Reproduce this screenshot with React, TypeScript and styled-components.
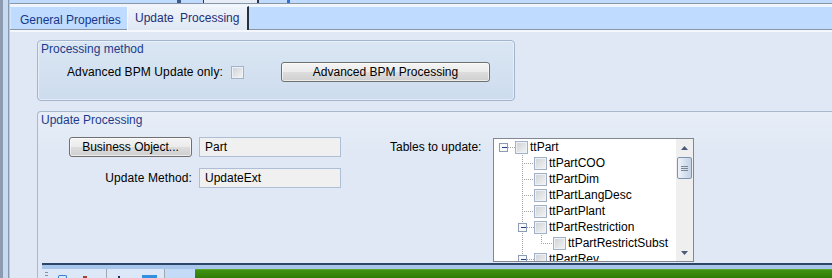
import styled, { createGlobalStyle } from 'styled-components';

const GlobalStyle = createGlobalStyle`
  html, body {
    margin: 0;
    padding: 0;
    background: #dfe8f4;
  }
  body {
    font-family: "Liberation Sans", Arial, sans-serif;
    font-size: 12px;
    color: #000;
    overflow: hidden;
  }
`;

const Window = styled.div`
  display: flex;
  width: 832px;
  height: 278px;
  overflow: hidden;
`;

const SideFrame = styled.div`
  flex: 0 0 10px;
  background: linear-gradient(to right, #8d9bb0 0 3px, #c6daf2 3px 8px, #8797ad 8px 9px, #b9cbe0 9px 10px);
`;

const Main = styled.div`
  flex: 1;
  min-width: 0;
  display: flex;
  flex-direction: column;
`;

const OuterStrip = styled.div`
  flex: 0 0 3px;
  display: flex;
  background: #bfdbff;
`;

const OuterMark = styled.span<{ $gap: number; $w: number; $color: string }>`
  margin-left: ${p => p.$gap}px;
  width: ${p => p.$w}px;
  background: ${p => p.$color};
`;

const OuterTab = styled.span`
  margin-left: 22px;
  width: 56px;
  box-sizing: border-box;
  border-left: 1px solid #2a3550;
  border-right: 2px solid #2a3550;
  background: #e6edf7;
`;

const TabStrip = styled.div`
  flex: 0 0 27px;
  box-sizing: border-box;
  display: flex;
  align-items: flex-end;
  border-top: 1px solid #8a96a6;
  border-bottom: 1px solid #8a96a6;
  background: linear-gradient(#eef5fd 0 3px, #bfdbff 3px);
`;

const Tab = styled.div<{ $active?: boolean }>`
  box-sizing: border-box;
  white-space: nowrap;
  line-height: 17px;
  ${p => p.$active ? `
    width: 122px;
    height: 24px;
    margin-bottom: -1px;
    padding: 3px 0 0 7px;
    border-top: 1px solid #f4f8fd;
    border-left: 1px solid #f4f8fd;
    border-right: 2px solid #26303f;
    background: linear-gradient(#eef3fa, #dfe8f4);
    color: #1e2f78;
    word-spacing: 3px;
  ` : `
    width: 117px;
    height: 21px;
    padding: 4px 0 0 9px;
    border-left: 1px solid #d6e6fa;
    color: #15378a;
  `}
`;

const Content = styled.div`
  flex: 1;
  min-height: 0;
  display: flex;
  flex-direction: column;
  gap: 10px;
  padding: 10px 0 0 27px;
  background: #dfe8f4;
  box-shadow: inset 0 2px 0 #f4f8fd;
  overflow: hidden;
`;

const ProcessingBox = styled.div`
  flex: 0 0 61px;
  width: 478px;
  box-sizing: border-box;
  border: 1px solid #a2b5cd;
  border-radius: 4px;
  background: linear-gradient(#dae6f3, #cddcee);
  box-shadow: inset 0 0 0 1px rgba(255, 255, 255, 0.45);
`;

const UpdateBox = styled.div`
  flex: 1;
  min-height: 0;
  margin-right: -10px;
  display: flex;
  flex-direction: column;
  border: 1px solid #a9b9cc;
  border-bottom: none;
  border-top-left-radius: 4px;
  background: linear-gradient(#e7eef8, #dfe8f4 40px);
`;

const GroupTitle = styled.div`
  padding: 1px 0 0 3px;
  line-height: 14px;
  color: #1d3b8b;
`;

const MethodRow = styled.div`
  display: flex;
  align-items: center;
  height: 20px;
  margin-top: 6px;
  padding-left: 29px;
`;

const Label = styled.span<{ $align?: string; $w?: number }>`
  ${p => p.$w ? `flex: 0 0 ${p.$w}px;` : ''}
  white-space: nowrap;
  text-align: ${p => p.$align || 'left'};
  line-height: 20px;
  letter-spacing: 0.1px;
`;

const Check = styled.span<{ $gap?: number }>`
  flex: 0 0 13px;
  width: 13px;
  height: 13px;
  box-sizing: border-box;
  margin-left: ${p => p.$gap || 0}px;
  border: 1px solid #a3b1c6;
  background: linear-gradient(135deg, #cdd0d5, #f5f5f5);
  box-shadow: inset 0 0 0 1px #eef1f5;
`;

const Button = styled.button<{ $w: number; $gap?: number }>`
  width: ${p => p.$w}px;
  height: 20px;
  margin-left: ${p => p.$gap || 0}px;
  padding: 0;
  box-sizing: border-box;
  border: 1px solid #707070;
  border-radius: 3px;
  background: linear-gradient(#f4f4f4, #ebebeb 50%, #dddddd 51%, #cfcfcf);
  box-shadow: inset 0 0 0 1px rgba(255, 255, 255, 0.6);
  font: inherit;
  color: #000;
  line-height: 18px;
`;

const UpdateBody = styled.div`
  display: flex;
  align-items: flex-start;
  margin-top: 10px;
  padding-left: 31px;
`;

const FieldGrid = styled.div`
  display: grid;
  grid-template-columns: 123px 142px;
  grid-auto-rows: 20px;
  column-gap: 7px;
  row-gap: 11px;
`;

const TextBox = styled.div`
  box-sizing: border-box;
  height: 20px;
  padding-left: 5px;
  border: 1px solid #aebfd5;
  background: #f0f0f0;
  line-height: 18px;
`;

const TablesLabel = styled.span`
  width: 103px;
  margin: 3px 0 0 49px;
  line-height: 14px;
  white-space: nowrap;
`;

const TreeBox = styled.div`
  display: flex;
  width: 201px;
  height: 124px;
  margin-top: 1px;
  box-sizing: border-box;
  border: 1px solid #828790;
  background: #fff;
`;

const TreeList = styled.div`
  flex: 1;
  overflow: hidden;
`;

const TreeRow = styled.div`
  display: flex;
  align-items: center;
  height: 16px;
  white-space: nowrap;
`;

const TreeText = styled.span`
  margin-left: 2px;
  line-height: 16px;
`;

const ScrollBar = styled.div`
  flex: 0 0 17px;
  display: flex;
  flex-direction: column;
  background: #efefef;
`;

const ScrollArrow = styled.div`
  flex: 0 0 17px;
  display: flex;
  align-items: center;
  justify-content: center;
`;

const ScrollTrack = styled.div`
  flex: 1;
  padding: 1px 1px 0 1px;
`;

const ScrollThumb = styled.div`
  height: 22px;
  box-sizing: border-box;
  border: 1px solid #7f93b0;
  border-radius: 2px;
  background: linear-gradient(to right, #eef3fa, #d2deee 60%, #c3d2e6);
  display: flex;
  flex-direction: column;
  align-items: center;
  justify-content: center;
  gap: 1px;
`;

const GripLine = styled.span`
  width: 7px;
  height: 1px;
  background: #7a8596;
`;

const DockBar = styled.div`
  flex: 0 0 15px;
  margin: auto 0 0 4px;
  box-sizing: border-box;
  display: flex;
  flex-direction: column;
  border-top: 2px solid #2c4669;
  padding-top: 4px;
  background: #a8c5ec;
`;

const DockRow = styled.div`
  flex: 1;
  display: flex;
`;

const DockTabs = styled.div`
  flex: 0 0 153px;
  display: flex;
  background: #dce8f8;
`;

const DockSlot = styled.div<{ $w: number; $light?: boolean }>`
  flex: 0 0 ${p => p.$w}px;
  box-sizing: border-box;
  display: flex;
  align-items: flex-end;
  border-right: ${p => p.$light ? 'none' : '1px solid #a3a8b0'};
  background: ${p => p.$light ? '#c4dbf8' : 'transparent'};
`;

const DockIcon = styled.span<{ $gap: number; $w: number; $h: number; $color: string; $outline?: boolean }>`
  margin-left: ${p => p.$gap}px;
  width: ${p => p.$w}px;
  height: ${p => p.$h}px;
  box-sizing: border-box;
  ${p => p.$outline
    ? `border: 1px solid ${p.$color}; border-bottom: none; border-radius: 2px 2px 0 0;`
    : `background: ${p.$color};`}
`;

const DockGrip = styled.span`
  align-self: center;
  margin-left: 3px;
  width: 3px;
  height: 4px;
  background: repeating-linear-gradient(#8a8f98 0 1px, transparent 1px 3px);
`;

const GreenFill = styled.div`
  flex: 1;
  border-top: 1px solid #5aa42c;
  background: linear-gradient(#3f9212, #2f7c06);
`;

type TreeNode = {
  label: string;
  level: number;
  expander?: boolean;
  hasNext?: boolean;
  rails?: number[];
};

const nodes: TreeNode[] = [
  { label: 'ttPart', level: 0, expander: true },
  { label: 'ttPartCOO', level: 1, hasNext: true },
  { label: 'ttPartDim', level: 1, hasNext: true },
  { label: 'ttPartLangDesc', level: 1, hasNext: true },
  { label: 'ttPartPlant', level: 1, hasNext: true },
  { label: 'ttPartRestriction', level: 1, expander: true, hasNext: true },
  { label: 'ttPartRestrictSubst', level: 2, rails: [28] },
  { label: 'ttPartRev', level: 1, expander: true, hasNext: true },
];

const DOT = '#a3a3a3';

// connector lines and +/- box drawn in front of each tree row
function Guides({ node }: { node: TreeNode }) {
  const width = 21 + 19 * node.level;
  const cx = 9 + 19 * node.level;
  const start = node.expander ? cx + 5 : cx;
  return (
    <svg width={width} height={16} style={{ flex: `0 0 ${width}px` }}>
      {(node.rails || []).map(x => (
        <line key={x} x1={x + 0.5} y1={0} x2={x + 0.5} y2={16} stroke={DOT} strokeDasharray="1 1" />
      ))}
      {node.level > 0 && (
        <line x1={cx + 0.5} y1={0} x2={cx + 0.5} y2={node.hasNext ? 16 : 8} stroke={DOT} strokeDasharray="1 1" />
      )}
      <line x1={start} y1={8.5} x2={width} y2={8.5} stroke={DOT} strokeDasharray="1 1" />
      {node.expander && (
        <g>
          <rect x={cx - 3.5} y={4.5} width={8} height={8} fill="#f7f8fa" stroke="#8e9cb3" />
          <line x1={cx - 1} y1={8.5} x2={cx + 4} y2={8.5} stroke="#1f3f88" />
        </g>
      )}
    </svg>
  );
}

function Arrow({ up }: { up?: boolean }) {
  return (
    <svg width={7} height={4}>
      <polygon points={up ? '0,4 7,4 3.5,0' : '0,0 7,0 3.5,4'} fill="#4a5a78" />
    </svg>
  );
}

export default function App() {
  return <Window>
    <GlobalStyle />
    <SideFrame />
    <Main>
      <OuterStrip>
        <OuterMark $gap={167} $w={4} $color="#3d5a8a" />
        <OuterTab />
        <OuterMark $gap={28} $w={3} $color="#2f6fd6" />
      </OuterStrip>
      <TabStrip>
        <Tab>General Properties</Tab>
        <Tab $active>Update Processing</Tab>
      </TabStrip>
      <Content>
        <ProcessingBox>
          <GroupTitle>Processing method</GroupTitle>
          <MethodRow>
            <Label $w={156}>Advanced BPM Update only:</Label>
            <Check $gap={8} />
            <Button $w={209} $gap={37}>Advanced BPM Processing</Button>
          </MethodRow>
        </ProcessingBox>
        <UpdateBox>
          <GroupTitle>Update Processing</GroupTitle>
          <UpdateBody>
            <FieldGrid>
              <Button $w={123}>Business Object...</Button>
              <TextBox>Part</TextBox>
              <Label $align="right">Update Method:</Label>
              <TextBox>UpdateExt</TextBox>
            </FieldGrid>
            <TablesLabel>Tables to update:</TablesLabel>
            <TreeBox>
              <TreeList>
                {nodes.map(node => (
                  <TreeRow key={node.label}>
                    <Guides node={node} />
                    <Check />
                    <TreeText>{node.label}</TreeText>
                  </TreeRow>
                ))}
              </TreeList>
              <ScrollBar>
                <ScrollArrow><Arrow up /></ScrollArrow>
                <ScrollTrack>
                  <ScrollThumb>
                    <GripLine />
                    <GripLine />
                    <GripLine />
                  </ScrollThumb>
                </ScrollTrack>
                <ScrollArrow><Arrow /></ScrollArrow>
              </ScrollBar>
            </TreeBox>
          </UpdateBody>
          <DockBar>
            <DockRow>
              <DockTabs>
                <DockSlot $w={65}>
                  <DockGrip />
                  <DockIcon $gap={10} $w={9} $h={3} $color="#2e7fd8" $outline />
                  <DockIcon $gap={16} $w={4} $h={2} $color="#a0443a" />
                </DockSlot>
                <DockSlot $w={58}>
                  <DockIcon $gap={11} $w={2} $h={2} $color="#1f2f6a" />
                  <DockIcon $gap={22} $w={15} $h={3} $color="#2f8fe0" />
                </DockSlot>
                <DockSlot $w={30} $light />
              </DockTabs>
              <GreenFill />
            </DockRow>
          </DockBar>
        </UpdateBox>
      </Content>
    </Main>
  </Window>;
}
